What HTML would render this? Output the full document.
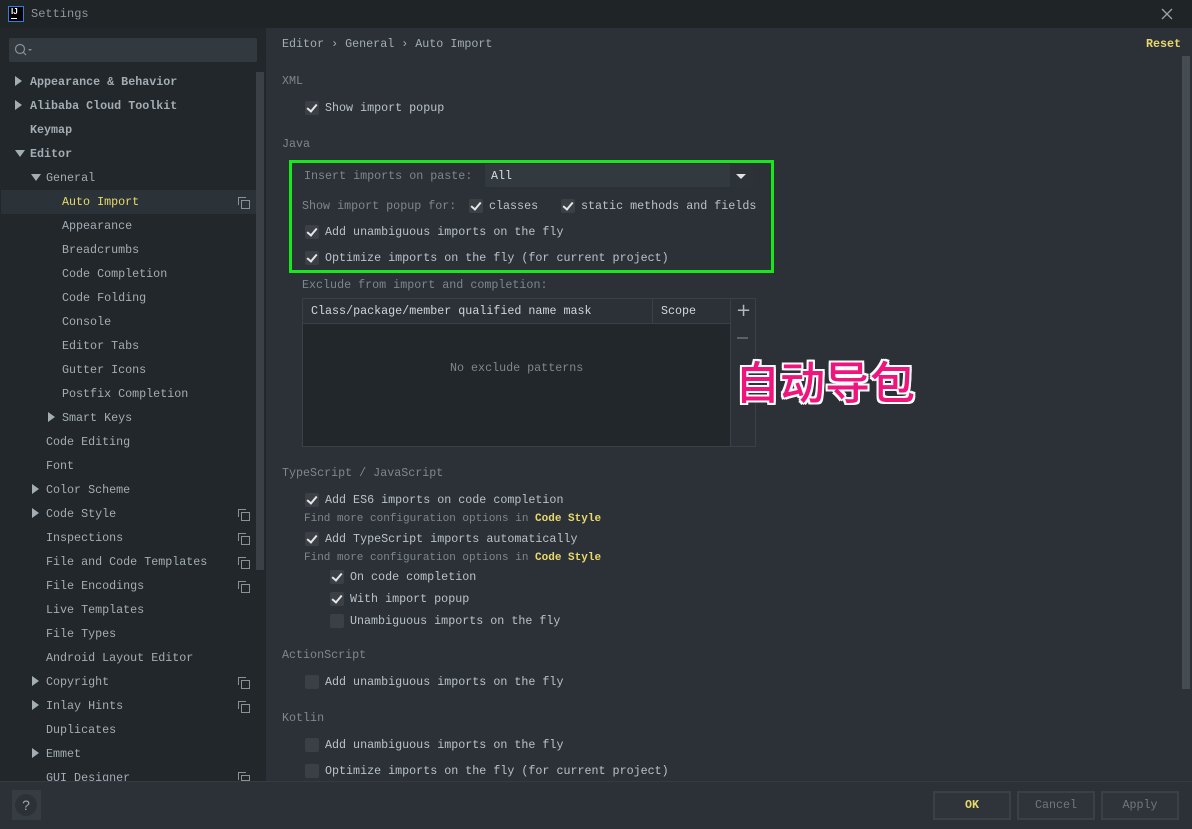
<!DOCTYPE html>
<html><head><meta charset="utf-8"><style>
*{margin:0;padding:0;box-sizing:border-box}
body{width:1192px;height:829px;overflow:hidden;background:#2b3137;font-family:"Liberation Mono",monospace;font-size:11.7px;color:#b9c2c9;position:relative}
.abs{position:absolute;white-space:nowrap}
.t{margin-top:1px}
#title{left:0;top:0;width:1192px;height:28px;background:#1f2427}
#side{left:0;top:28px;width:266px;height:753px;background:#22272b}
#foot{left:0;top:781px;width:1192px;height:48px;background:#2b3137;border-top:1px solid #353b40}
.s{color:#a3adb4;margin-top:1px}
.dim{color:#7e878d;margin-top:1px}
.cb{position:absolute;width:14px;height:14px;background:#3a4046;border-radius:2px}
.cb.on::after{content:"";position:absolute;left:4px;top:1px;width:4px;height:8px;border:solid #e6e6e6;border-width:0 2px 2px 0;transform:rotate(40deg)}
.tri{position:absolute;width:0;height:0}
.tr{border-left:7px solid #a3adb4;border-top:5px solid transparent;border-bottom:5px solid transparent}
.td{border-top:7px solid #a3adb4;border-left:5px solid transparent;border-right:5px solid transparent}
.cp{position:absolute;width:9px;height:9px;border:1px solid #8a9298}
.cp::after{content:"";position:absolute;left:-4px;top:-4px;width:7px;height:7px;border-left:1px solid #8a9298;border-top:1px solid #8a9298}
.btn{position:absolute;top:791px;height:29px;width:78px;border:2px solid #3a4046;background:#2e343a;text-align:center;line-height:25px;color:#6e777d}
.y{color:#e8d96a}
</style></head><body>
<div id="title" class="abs"></div>
<div class="abs" style="left:8px;top:6px;width:16px;height:16px;border:1px solid #2f7fe0;background:#000;color:#fff;font-size:8px;font-weight:bold;line-height:10px;padding-left:2px;font-family:'Liberation Sans',sans-serif">IJ<div style="width:6px;height:1px;background:#fff;margin-top:1px"></div></div>
<div class="abs" style="left:31px;top:7px;color:#8e979d;font-size:12px">Settings</div>
<svg class="abs" style="left:1161px;top:8px" width="12" height="12"><path d="M1 1L11 11M11 1L1 11" stroke="#9aa2a8" stroke-width="1.3"/></svg>

<div id="side" class="abs"></div>
<div class="abs" style="left:9px;top:38px;width:248px;height:24px;background:#323a40;border-radius:2px"></div>
<svg class="abs" style="left:14px;top:43px" width="20" height="14"><circle cx="6" cy="6" r="4.5" fill="none" stroke="#8a9298" stroke-width="1.2"/><line x1="9" y1="9" x2="12" y2="12" stroke="#8a9298" stroke-width="1.2"/><path d="M14 6h4l-2 2z" fill="#8a9298"/></svg>
<div class="abs" style="left:256px;top:72px;width:8px;height:498px;background:#3a4046"></div>
<div class="abs" style="left:1px;top:190px;width:255px;height:24px;background:#2c3338"></div>

<div class="tri tr" style="left:15px;top:76px"></div><div class="abs s" style="left:30px;top:74px;font-weight:bold">Appearance &amp; Behavior</div>
<div class="tri tr" style="left:15px;top:100px"></div><div class="abs s" style="left:30px;top:98px;font-weight:bold">Alibaba Cloud Toolkit</div>
<div class="abs s" style="left:30px;top:122px;font-weight:bold">Keymap</div>
<div class="tri td" style="left:15px;top:150px"></div><div class="abs s" style="left:30px;top:146px;font-weight:bold">Editor</div>
<div class="tri td" style="left:31px;top:174px"></div><div class="abs s" style="left:46px;top:170px">General</div>
<div class="abs y t" style="left:62px;top:194px">Auto Import</div><div class="cp" style="left:241px;top:200px"></div>
<div class="abs s" style="left:62px;top:218px">Appearance</div>
<div class="abs s" style="left:62px;top:242px">Breadcrumbs</div>
<div class="abs s" style="left:62px;top:266px">Code Completion</div>
<div class="abs s" style="left:62px;top:290px">Code Folding</div>
<div class="abs s" style="left:62px;top:314px">Console</div>
<div class="abs s" style="left:62px;top:338px">Editor Tabs</div>
<div class="abs s" style="left:62px;top:362px">Gutter Icons</div>
<div class="abs s" style="left:62px;top:386px">Postfix Completion</div>
<div class="tri tr" style="left:48px;top:412px"></div><div class="abs s" style="left:62px;top:410px">Smart Keys</div>
<div class="abs s" style="left:46px;top:434px">Code Editing</div>
<div class="abs s" style="left:46px;top:458px">Font</div>
<div class="tri tr" style="left:32px;top:484px"></div><div class="abs s" style="left:46px;top:482px">Color Scheme</div>
<div class="tri tr" style="left:32px;top:508px"></div><div class="abs s" style="left:46px;top:506px">Code Style</div><div class="cp" style="left:241px;top:512px"></div>
<div class="abs s" style="left:46px;top:530px">Inspections</div><div class="cp" style="left:241px;top:536px"></div>
<div class="abs s" style="left:46px;top:554px">File and Code Templates</div><div class="cp" style="left:241px;top:560px"></div>
<div class="abs s" style="left:46px;top:578px">File Encodings</div><div class="cp" style="left:241px;top:584px"></div>
<div class="abs s" style="left:46px;top:602px">Live Templates</div>
<div class="abs s" style="left:46px;top:626px">File Types</div>
<div class="abs s" style="left:46px;top:650px">Android Layout Editor</div>
<div class="tri tr" style="left:32px;top:676px"></div><div class="abs s" style="left:46px;top:674px">Copyright</div><div class="cp" style="left:241px;top:680px"></div>
<div class="tri tr" style="left:32px;top:700px"></div><div class="abs s" style="left:46px;top:698px">Inlay Hints</div><div class="cp" style="left:241px;top:704px"></div>
<div class="abs s" style="left:46px;top:722px">Duplicates</div>
<div class="tri tr" style="left:32px;top:748px"></div><div class="abs s" style="left:46px;top:746px">Emmet</div>
<div class="abs s" style="left:46px;top:770px;height:11px;overflow:hidden">GUI Designer</div><div class="cp" style="left:241px;top:775px;height:6px"></div>

<!-- main -->
<div class="abs s" style="left:282px;top:36px">Editor › General › Auto Import</div>
<div class="abs y t" style="left:1146px;top:36px;font-weight:bold">Reset</div>
<div class="abs" style="left:1182px;top:56px;width:8px;height:633px;background:#464d52"></div>

<div class="abs dim" style="left:282px;top:73px">XML</div>
<div class="cb on" style="left:305px;top:101px"></div><div class="abs t" style="left:325px;top:100px">Show import popup</div>
<div class="abs dim" style="left:282px;top:136px">Java</div>
<div class="abs" style="left:289px;top:160px;width:485px;height:113px;border:3px solid #17e81a"></div>
<div class="abs dim" style="left:304px;top:168px">Insert imports on paste:</div>
<div class="abs" style="left:485px;top:164px;width:268px;height:23px;background:#323a40"></div>
<div class="abs t" style="left:491px;top:168px;color:#d8dde0">All</div>
<div class="abs" style="left:730px;top:164px;width:23px;height:23px;background:#2c3238"></div>
<div class="tri" style="left:736px;top:174px;border-top:5px solid #e0e0e0;border-left:5px solid transparent;border-right:5px solid transparent"></div>
<div class="abs dim" style="left:302px;top:198px">Show import popup for:</div>
<div class="cb on" style="left:469px;top:199px"></div><div class="abs t" style="left:489px;top:198px">classes</div>
<div class="cb on" style="left:561px;top:199px"></div><div class="abs t" style="left:581px;top:198px">static methods and fields</div>
<div class="cb on" style="left:305px;top:225px"></div><div class="abs t" style="left:325px;top:224px">Add unambiguous imports on the fly</div>
<div class="cb on" style="left:305px;top:251px"></div><div class="abs t" style="left:325px;top:250px">Optimize imports on the fly (for current project)</div>
<div class="abs dim" style="left:302px;top:277px">Exclude from import and completion:</div>
<div class="abs" style="left:302px;top:298px;width:454px;height:149px;border:1px solid #3a4046"></div>
<div class="abs" style="left:303px;top:299px;width:427px;height:25px;border-bottom:1px solid #3a4046"></div>
<div class="abs" style="left:652px;top:299px;width:1px;height:25px;background:#3a4046"></div>
<div class="abs" style="left:303px;top:324px;width:427px;height:122px;background:#22272b"></div>
<div class="abs" style="left:730px;top:299px;width:1px;height:147px;background:#3a4046"></div>
<div class="abs t" style="left:311px;top:303px;color:#d0d6da">Class/package/member qualified name mask</div>
<div class="abs t" style="left:661px;top:303px;color:#d0d6da">Scope</div>
<div class="abs" style="left:736px;top:300px;color:#b0b8be;font-size:18px;font-family:'DejaVu Sans',sans-serif">+</div>
<div class="abs" style="left:737px;top:337px;width:11px;height:2px;background:#5a6167"></div>
<div class="abs dim" style="left:450px;top:360px">No exclude patterns</div>
<div class="abs" style="left:735px;top:350px;font-family:'Noto Sans CJK SC',sans-serif;font-size:45px;font-weight:500;color:#f0157d;text-shadow:2px 0 #fff,-2px 0 #fff,0 2px #fff,0 -2px #fff,2px 2px #fff,-2px -2px #fff,2px -2px #fff,-2px 2px #fff;line-height:60px">自动导包</div>

<div class="abs dim" style="left:282px;top:465px">TypeScript / JavaScript</div>
<div class="cb on" style="left:305px;top:493px"></div><div class="abs t" style="left:325px;top:492px">Add ES6 imports on code completion</div>
<div class="abs dim" style="left:304px;top:512px;font-size:11px">Find more configuration options in <span class="y" style="font-weight:bold">Code Style</span></div>
<div class="cb on" style="left:305px;top:532px"></div><div class="abs t" style="left:325px;top:531px">Add TypeScript imports automatically</div>
<div class="abs dim" style="left:304px;top:551px;font-size:11px">Find more configuration options in <span class="y" style="font-weight:bold">Code Style</span></div>
<div class="cb on" style="left:330px;top:570px"></div><div class="abs t" style="left:350px;top:569px">On code completion</div>
<div class="cb on" style="left:330px;top:592px"></div><div class="abs t" style="left:350px;top:591px">With import popup</div>
<div class="cb" style="left:330px;top:614px"></div><div class="abs t" style="left:350px;top:613px">Unambiguous imports on the fly</div>
<div class="abs dim" style="left:282px;top:647px">ActionScript</div>
<div class="cb" style="left:305px;top:675px"></div><div class="abs t" style="left:325px;top:674px">Add unambiguous imports on the fly</div>
<div class="abs dim" style="left:282px;top:710px">Kotlin</div>
<div class="cb" style="left:305px;top:738px"></div><div class="abs t" style="left:325px;top:737px">Add unambiguous imports on the fly</div>
<div class="cb" style="left:305px;top:764px"></div><div class="abs t" style="left:325px;top:763px">Optimize imports on the fly (for current project)</div>

<div id="foot" class="abs"></div>
<div class="abs" style="left:12px;top:790px;width:29px;height:30px;background:#353c42"></div>
<div class="abs" style="left:15px;top:794px;width:22px;height:22px;border-radius:50%;background:#2b3137;color:#a0a8ae;text-align:center;line-height:22px;font-size:14px;font-family:'Liberation Sans',sans-serif">?</div>
<div class="btn y" style="left:933px;font-weight:bold">OK</div>
<div class="btn" style="left:1017px">Cancel</div>
<div class="btn" style="left:1101px">Apply</div>
</body></html>
